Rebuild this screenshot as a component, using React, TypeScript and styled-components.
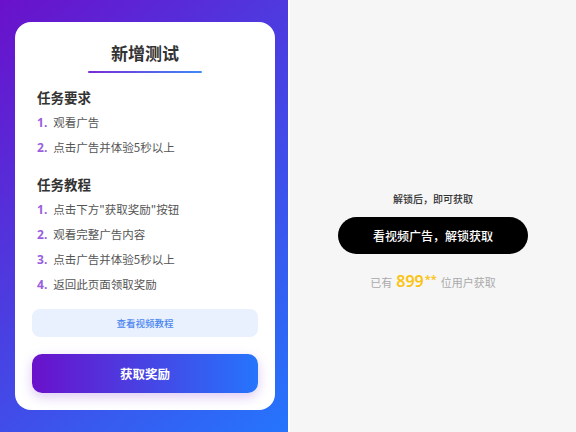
import React from "react";
import styled, { createGlobalStyle } from "styled-components";

const Global = createGlobalStyle`
  html, body { margin: 0; padding: 0; }
  body {
    font-family: "Noto Sans CJK SC", "Noto Sans", sans-serif;
    width: 576px;
    height: 432px;
    overflow: hidden;
  }
  * { box-sizing: border-box; }
`;

const Page = styled.div`
  display: flex;
  width: 576px;
  height: 432px;
`;

const LeftPanel = styled.div`
  width: 288px;
  height: 432px;
  padding: 22px 13px 0 15px;
  background: linear-gradient(135deg, #6a11cb 0%, #2575fc 100%);
`;

const Card = styled.div`
  background: #fff;
  border-radius: 16px;
  padding: 18px 17px 17px;
  display: flex;
  flex-direction: column;
`;

const Title = styled.h1`
  margin: 0;
  text-align: center;
  font-size: 17px;
  line-height: 25px;
  font-weight: 700;
  color: #333;
`;

const Underline = styled.div`
  width: 114px;
  height: 2px;
  margin: 6px auto 0;
  border-radius: 1px;
  background: linear-gradient(90deg, #7a2bd6, #3d8bf7);
`;

const Section = styled.div<{ $top: number }>`
  margin-top: ${(p) => p.$top}px;
  padding: 0 5px;
`;

const SectionTitle = styled.h2`
  margin: 0;
  font-size: 13.5px;
  line-height: 20px;
  font-weight: 700;
  color: #333;
`;

const List = styled.ol<{ $gap: number }>`
  list-style: none;
  margin: ${(p) => p.$gap}px 0 0;
  padding: 0;
`;

const Item = styled.li`
  font-size: 11.5px;
  line-height: 25px;
  color: #555;
  display: flex;
  align-items: center;
`;

const Num = styled.span`
  color: #9b5ee0;
  font-weight: 700;
  font-size: 12px;
  font-family: "Noto Sans", sans-serif;
  margin-right: 6px;
`;

const VideoButton = styled.button`
  margin-top: 12px;
  height: 28px;
  width: 100%;
  border: none;
  border-radius: 8px;
  background: #e9f1fe;
  color: #4a85ee;
  font-family: inherit;
  font-size: 9.5px;
  font-weight: 500;
`;

const RewardButton = styled.button`
  margin-top: 17px;
  height: 39px;
  width: 100%;
  border: none;
  border-radius: 10px;
  background: linear-gradient(90deg, #6a11cb 0%, #2575fc 100%);
  color: #fff;
  font-family: inherit;
  font-size: 12.5px;
  font-weight: 700;
  box-shadow: 0 4px 12px rgba(120, 40, 210, 0.25);
`;

const RightPanel = styled.div`
  flex: 1;
  height: 432px;
  background: #f6f6f6;
  border-left: 2px solid #fff;
  display: flex;
  flex-direction: column;
  align-items: center;
  padding-top: 192px;
`;

const Hint = styled.div`
  font-size: 10px;
  line-height: 14px;
  font-weight: 500;
  color: #333;
`;

const UnlockButton = styled.button`
  margin-top: 11px;
  width: 190px;
  height: 37px;
  border: none;
  border-radius: 19px;
  background: #000;
  color: #fff;
  font-family: inherit;
  font-size: 12px;
  font-weight: 500;
`;

const Count = styled.div`
  margin-top: 17px;
  font-size: 11px;
  line-height: 20px;
  color: #aaa;
  display: flex;
  align-items: baseline;
`;

const Highlight = styled.span`
  color: #fbc312;
  font-family: "Noto Sans", sans-serif;
  font-weight: 600;
  font-size: 16px;
  margin: 0 4px;
`;

const Stars = styled.span`
  font-size: 11px;
  position: relative;
  top: -4px;
  margin-left: 1px;
`;

const requirements = ["观看广告", "点击广告并体验5秒以上"];
const tutorial = [
  "点击下方\"获取奖励\"按钮",
  "观看完整广告内容",
  "点击广告并体验5秒以上",
  "返回此页面领取奖励",
];

export default function App() {
  return (
    <Page>
      <Global />
      <LeftPanel>
        <Card>
          <Title>新增测试</Title>
          <Underline />
          <Section $top={14}>
            <SectionTitle>任务要求</SectionTitle>
            <List $gap={3}>
              {requirements.map((t, i) => (
                <Item key={t}>
                  <Num>{i + 1}.</Num>
                  {t}
                </Item>
              ))}
            </List>
          </Section>
          <Section $top={14}>
            <SectionTitle>任务教程</SectionTitle>
            <List $gap={3}>
              {tutorial.map((t, i) => (
                <Item key={t}>
                  <Num>{i + 1}.</Num>
                  {t}
                </Item>
              ))}
            </List>
          </Section>
          <VideoButton>查看视频教程</VideoButton>
          <RewardButton>获取奖励</RewardButton>
        </Card>
      </LeftPanel>
      <RightPanel>
        <Hint>解锁后，即可获取</Hint>
        <UnlockButton>看视频广告，解锁获取</UnlockButton>
        <Count>
          已有
          <Highlight>
            899<Stars>**</Stars>
          </Highlight>
          位用户获取
        </Count>
      </RightPanel>
    </Page>
  );
}
